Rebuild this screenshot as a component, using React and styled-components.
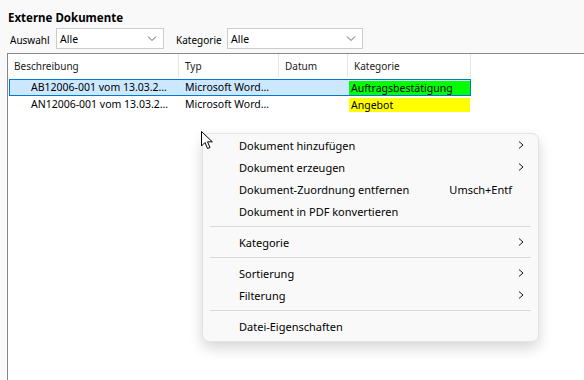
import React from "react";
import styled, { createGlobalStyle } from "styled-components";

const GlobalStyle = createGlobalStyle`
    html, body {
        margin: 0;
        height: 100%;
        background: #f9f9f9;
        font-family: "Noto Sans", "Open Sans", sans-serif;
        font-size: 10px;
        color: #000;
        overflow: hidden;
    }
    #root {
        height: 100%;
    }
`;

const columns = [
    { key: "desc", label: "Beschreibung", width: 171 },
    { key: "type", label: "Typ", width: 100 },
    { key: "date", label: "Datum", width: 69 },
    { key: "cat", label: "Kategorie", width: 123 },
];

const rows = [
    { desc: "AB12006-001 vom 13.03.2…", type: "Microsoft Word…", date: "", cat: "Auftragsbestätigung", color: "#00ff00", selected: true },
    { desc: "AN12006-001 vom 13.03.2…", type: "Microsoft Word…", date: "", cat: "Angebot", color: "#ffff00" },
];

const menu = [
    { label: "Dokument hinzufügen", sub: true },
    { label: "Dokument erzeugen", sub: true },
    { label: "Dokument-Zuordnung entfernen", shortcut: "Umsch+Entf" },
    { label: "Dokument in PDF konvertieren" },
    "sep",
    { label: "Kategorie", sub: true },
    "sep",
    { label: "Sortierung", sub: true },
    { label: "Filterung", sub: true },
    "sep",
    { label: "Datei-Eigenschaften" },
];

const Chevron = () => (
    <svg width="10" height="10" viewBox="0 0 10 10">
        <path d="M3 1.5 L7 5 L3 8.5" fill="none" stroke="#1a1a1a" strokeWidth="1" />
    </svg>
);

const DownArrow = () => (
    <svg width="10" height="6" viewBox="0 0 10 6">
        <path d="M1 0.5 L5 4.5 L9 0.5" fill="none" stroke="#606060" strokeWidth="1" />
    </svg>
);

const Cursor = () => (
    <svg width="14" height="20" viewBox="0 0 14 20">
        <path d="M0.5 0.5 L0.5 15 L4 11.5 L6.5 17.5 L9 16.5 L6.5 10.8 L11.3 10.8 Z" fill="#fff" stroke="#000" strokeWidth="1" strokeLinejoin="round" />
    </svg>
);

const Dropdown = ({ label, value, labelWidth, width }) => (
    <Field>
        <FieldLabel $width={labelWidth}>{label}</FieldLabel>
        <Select $width={width}>
            <span>{value}</span>
            <DownArrow />
        </Select>
    </Field>
);

const App = () => {
    return (
        <>
            <GlobalStyle />
            <Page>
                <Title>Externe Dokumente</Title>
                <FilterBar>
                    <Dropdown label="Auswahl" value="Alle" labelWidth={46} width={108} />
                    <Dropdown label="Kategorie" value="Alle" labelWidth={51} width={136} />
                </FilterBar>
                <Panel>
                    <HeaderRow>
                        {columns.map((c) => (
                            <HeaderCell key={c.key} $width={c.width}>{c.label}</HeaderCell>
                        ))}
                    </HeaderRow>
                    <Body>
                        {rows.map((r, i) => (
                            <Row key={i} $selected={r.selected}>
                                <Cell $width={170} $indent={21}>{r.desc}</Cell>
                                <Cell $width={100}>{r.type}</Cell>
                                <Cell $width={69}>{r.date}</Cell>
                                <TagCell $width={121} $color={r.color}>{r.cat}</TagCell>
                            </Row>
                        ))}
                    </Body>
                    <Menu>
                        {menu.map((m, i) =>
                            m === "sep" ? (
                                <Separator key={i} />
                            ) : (
                                <MenuItem key={i}>
                                    <MenuLabel>{m.label}</MenuLabel>
                                    {m.shortcut && <Shortcut>{m.shortcut}</Shortcut>}
                                    <Arrow>{m.sub && <Chevron />}</Arrow>
                                </MenuItem>
                            )
                        )}
                    </Menu>
                    <CursorWrap>
                        <Cursor />
                    </CursorWrap>
                </Panel>
            </Page>
        </>
    );
};

const Page = styled.div`
    display: flex;
    flex-direction: column;
    height: 100%;
`;

const Title = styled.div`
    font-weight: bold;
    font-size: 11.5px;
    line-height: 16px;
    padding: 10px 0 0 8px;
`;

const FilterBar = styled.div`
    display: flex;
    align-items: center;
    gap: 12px;
    padding: 2px 0 0 10px;
    height: 21px;
`;

const Field = styled.div`
    display: flex;
    align-items: center;
`;

const FieldLabel = styled.span`
    width: ${(p) => p.$width}px;
    line-height: 16px;
    padding-top: 2px;
`;

const Select = styled.div`
    box-sizing: border-box;
    width: ${(p) => p.$width}px;
    height: 21px;
    background: #fff;
    border: 1px solid #cdcdcd;
    display: flex;
    align-items: center;
    justify-content: space-between;
    padding: 0 6px 0 3px;
    font-size: 10.5px;
`;

const Panel = styled.div`
    position: relative;
    flex: 1;
    margin: 4px 0 0 7px;
    background: #fff;
    border-top: 1px solid #8a8a90;
    border-left: 1px solid #84848a;
`;

const HeaderRow = styled.div`
    display: flex;
    height: 23px;
`;

const HeaderCell = styled.div`
    box-sizing: border-box;
    width: ${(p) => p.$width}px;
    padding-left: 6px;
    padding-top: 1px;
    border-right: 1px solid #e5e5e5;
    display: flex;
    align-items: center;
    color: #1a1a1a;
`;

const Body = styled.div`
    display: flex;
    flex-direction: column;
    padding: 2px 0 0 1px;
`;

const Row = styled.div`
    box-sizing: border-box;
    display: flex;
    align-items: center;
    width: 462px;
    height: 17px;
    border: 1px solid ${(p) => (p.$selected ? "#0078d7" : "transparent")};
    background: ${(p) => (p.$selected ? "#cce8ff" : "transparent")};
`;

const Cell = styled.div`
    box-sizing: border-box;
    width: ${(p) => p.$width}px;
    padding-left: ${(p) => p.$indent || 5}px;
    white-space: nowrap;
    overflow: hidden;
    line-height: 15px;
    font-size: 10.5px;
`;

const TagCell = styled(Cell)`
    padding-left: 2px;
    background: ${(p) => p.$color};
    height: 14px;
    line-height: 14px;
`;

const CursorWrap = styled.div`
    position: absolute;
    left: 193px;
    top: 77px;
    line-height: 0;
`;

const Menu = styled.div`
    position: absolute;
    left: 194px;
    top: 79px;
    width: 337px;
    box-sizing: border-box;
    padding: 0 0 4px;
    background: #f9f9f9;
    border: 1px solid #e3e3e3;
    border-radius: 7px;
    box-shadow: 0 6px 14px rgba(0, 0, 0, 0.16);
    font-size: 11px;
`;

const MenuItem = styled.div`
    display: flex;
    align-items: center;
    height: 22px;
    padding: 0 12px 0 36px;
    color: #000;
`;

const MenuLabel = styled.span`
    flex: 1;
    white-space: nowrap;
`;

const Shortcut = styled.span`
    margin-right: 4px;
`;

const Arrow = styled.span`
    width: 10px;
    display: flex;
    align-items: center;
`;

const Separator = styled.div`
    height: 1px;
    background: #d9d9d9;
    margin: 4px 7px;
`;

export default App;
